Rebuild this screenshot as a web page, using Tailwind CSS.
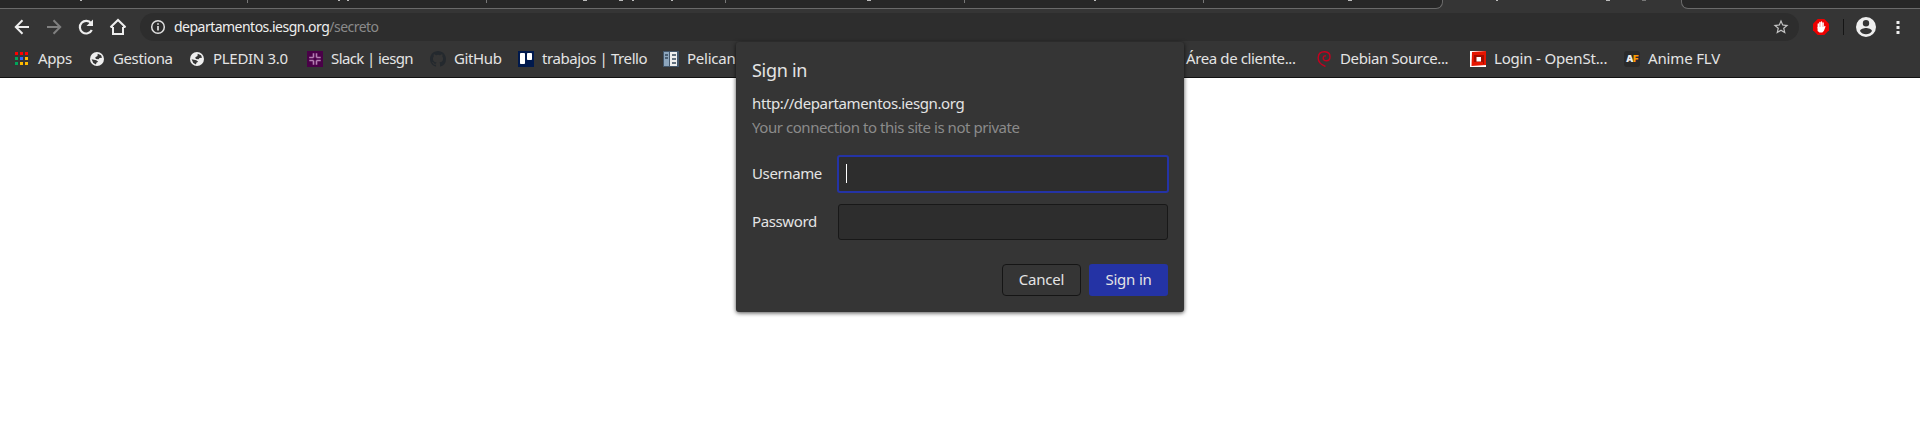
<!DOCTYPE html>
<html lang="es">
<head>
<meta charset="utf-8">
<title>departamentos.iesgn.org</title>
<script src="https://cdn.jsdelivr.net/npm/@tailwindcss/browser@4"></script>
</head>
<body class="h-[428px] overflow-hidden bg-white font-['Noto_Sans',sans-serif] text-[15px] leading-5 tracking-[-0.38px] text-[#e4e4e4]">
<div class="relative">
  <header class="h-[78px] border-b border-[#121212] bg-[#353535]">
    <!-- Bottom edge of the tab strip -->
    <div class="relative flex h-[9px]">
      <div class="h-[9px] w-[1443px] overflow-hidden rounded-br-[7px] border-r border-b border-[#6a6a6a] bg-[#272727]">
        <div class="flex h-[3px] pl-[247px]">
          <div class="w-[239px] border-l border-[#777]"></div><div class="w-[239px] border-l border-[#777]"></div><div class="w-[239px] border-l border-[#777]"></div><div class="w-[239px] border-l border-[#777]"></div><div class="w-[239px] border-l border-[#777]"></div>
        </div>
      </div>
      <div class="w-[238px]"></div>
      <div class="h-[9px] flex-1 rounded-bl-[7px] border-b border-l border-[#6a6a6a] bg-[#272727]"></div>
      <svg class="absolute top-0 left-0 h-px w-[1920px]" viewBox="0 0 1920 1" fill="#bbb"><path d="M80 0h2v1h-2zM338 0h2v1h-2zM347 0h2v1h-2zM583 0h4v1h-4zM619 0h4v1h-4zM632 0h2v1h-2zM671 0h2v1h-2zM867 0h4v1h-4zM1094 0h2v1h-2zM1348 0h4v1h-4zM1496 0h2v1h-2zM1606 0h4v1h-4z"/><path fill="#777" d="M1642 0h4v1h-4z"/></svg>
    </div>
    <!-- Toolbar -->
    <div class="flex h-[36px] items-center">
      <div class="flex w-[140px] items-center gap-2 pl-[10px]">
        <svg class="size-6" viewBox="0 0 24 24" fill="none" stroke="#eee" stroke-width="2"><path d="M19 12H6M12.500 5.300l-6.700 6.700 6.700 6.700"/></svg>
        <svg class="size-6" viewBox="0 0 24 24" fill="none" stroke="#808080" stroke-width="2"><path d="M5 12h13M11.500 5.300l6.700 6.700-6.700 6.700"/></svg>
        <svg class="size-6" viewBox="0 0 24 24" fill="none" stroke="#eee" stroke-width="2.200"><path d="M17.800 15a6.300 6.300 0 1 1-.6-6.600"/><path fill="#eee" stroke="none" d="M19 4.500V11h-6.500z"/></svg>
        <svg class="size-6" viewBox="0 0 24 24" fill="none" stroke="#eee" stroke-width="2"><path d="M7 12v7h10v-7M4.500 12H7M17 12h2.500M4.500 12.300L12 5l7.500 7.300"/></svg>
      </div>
      <div class="flex h-7 w-[1659px] shrink-0 items-center rounded-full bg-[#2d2d2d] pr-[9px] pl-[10px]">
        <svg class="size-4" viewBox="0 0 16 16" fill="none" stroke="#e0e0e0" stroke-width="1.500"><circle cx="8" cy="8" r="6.300"/><path d="M8 7v4.500M8 4.200v1.600" stroke-width="1.700"/></svg>
        <span class="ml-2 flex-1 text-[14px] tracking-[-0.52px] text-[#eee]">departamentos.iesgn.org<span class="text-[#8a8a8a]">/secreto</span></span>
        <svg class="size-[18px]" viewBox="0 0 24 24" fill="#c4c4c4"><path d="M22 9.240l-7.190-.620L12 2 9.190 8.630 2 9.240l5.460 4.730L5.820 21 12 17.270 18.180 21l-1.630-7.030L22 9.240zM12 15.400l-3.760 2.270 1-4.280-3.320-2.880 4.380-.380L12 6.100l1.710 4.040 4.380.380-3.320 2.880 1 4.280L12 15.400z"/></svg>
      </div>
      <svg class="ml-[14px] size-4" viewBox="0 0 16 16"><path fill="#ed0000" d="M4.700 0h6.600L16 4.700v6.600L11.300 16H4.700L0 11.300V4.700z"/><path d="M5.300 5v4M6.900 3.500v5M8.500 3v5.700M10.100 4v5" stroke="#fff" stroke-width="1.400" stroke-linecap="round"/><path fill="#fff" d="M4.600 8h6.200l1-1.200.8.800-1.800 4.400-1.500 1.500H6.500L4.600 12z"/></svg>
      <div class="ml-[14px] h-4 w-px bg-[#151515]"></div>
      <svg class="ml-[11px] size-[22px]" viewBox="1 1 22 22" fill="#eee"><path d="M12 2a10 10 0 1 0 0 20 10 10 0 0 0 0-20zm0 3a3.200 3.200 0 1 1 0 6.400A3.200 3.200 0 0 1 12 5zm0 14.200a7.200 7.200 0 0 1-6-3.200c0-2 4-3.100 6-3.100s6 1.100 6 3.100a7.200 7.200 0 0 1-6 3.200z"/></svg>
      <svg class="ml-[13px] size-4" viewBox="0 0 16 16" fill="#eee"><path d="M6.500 2h3v3h-3zM6.500 7h3v3h-3zM6.500 12h3v3h-3z"/></svg>
    </div>
    <!-- Bookmarks -->
    <nav class="flex h-7 items-center pl-[14px] whitespace-nowrap">
      <div class="flex w-[75px] shrink-0 items-center gap-2"><svg class="size-4 shrink-0" viewBox="0 0 16 16"><path fill="#f00" d="M1 1h3v3H1zM6 1h3v3H6zM11 1h3v3h-3z"/><path fill="#00a65a" d="M1 6h3v3H1zM1 11h3v3H1z"/><path fill="#36f" d="M6 6h3v3H6z"/><path fill="#fb0" d="M11 6h3v3h-3zM6 11h3v3H6zM11 11h3v3h-3z"/></svg><span class="pb-0.5">Apps</span></div>
      <div class="flex w-[100px] shrink-0 items-center gap-2"><svg class="size-4 shrink-0" viewBox="0 0 16 16"><circle cx="8" cy="8" r="7" fill="#eee"/><path fill="#353535" d="M8.700 2.700l3.400 1.500.9 2.500-2.500.2-.8 1.300L6.800 8 6.300 6.300 8.500 5zM2.600 8.200l4.700 1 1.900 1.600-1.800 1-.4 1.700-2.700-1.600z"/></svg><span class="pb-0.5">Gestiona</span></div>
      <div class="flex w-[118px] shrink-0 items-center gap-2"><svg class="size-4 shrink-0" viewBox="0 0 16 16"><circle cx="8" cy="8" r="7" fill="#eee"/><path fill="#353535" d="M8.700 2.700l3.400 1.500.9 2.500-2.500.2-.8 1.300L6.800 8 6.300 6.300 8.500 5zM2.600 8.200l4.700 1 1.900 1.600-1.800 1-.4 1.700-2.700-1.600z"/></svg><span class="pb-0.5 tracking-[-0.3px]">PLEDIN 3.0</span></div>
      <div class="flex w-[123px] shrink-0 items-center gap-2"><svg class="size-4 shrink-0" viewBox="0 0 16 16"><path fill="#4a0048" d="M0 0h16v16H0z"/><path d="M6.500 2.300v4.200M2.200 6.500h4.300M9.500 2.300v4.200M9.500 6.500h4.200M2.300 9.500h4.200M6.500 9.500v4.200M9.500 9.500h4.200M9.500 9.500v4.200" stroke="#b47eb2" stroke-width="1.600"/></svg><span class="pb-0.5 tracking-[-0.6px]">Slack | iesgn</span></div>
      <div class="flex w-[88px] shrink-0 items-center gap-2"><svg class="size-4 shrink-0" viewBox="0 0 16 16"><path fill="#24292e" d="M8 0C3.580 0 0 3.580 0 8c0 3.540 2.290 6.530 5.470 7.590.4.070.55-.17.55-.38v-1.490c-2.010.37-2.530-.49-2.690-.94-.09-.23-.48-.94-.82-1.130-.28-.15-.68-.52-.01-.53.63-.01 1.080.58 1.230.82.720 1.210 1.870.87 2.330.66.070-.52.280-.87.510-1.070-1.780-.2-3.640-.89-3.640-3.950 0-.87.310-1.590.82-2.150-.08-.2-.36-1.020.080-2.120 0 0 .67-.21 2.200.82a7.600 7.600 0 0 1 4 0c1.530-1.040 2.200-.82 2.200-.82.440 1.100.160 1.920.080 2.120.510.560.820 1.270.820 2.150 0 3.070-1.870 3.750-3.650 3.950.290.250.540.730.540 1.480v2.200c0 .210.150.460.550.380A8 8 0 0 0 16 8c0-4.420-3.580-8-8-8z"/></svg><span class="pb-0.5">GitHub</span></div>
      <div class="flex w-[145px] shrink-0 items-center gap-2"><svg class="size-4 shrink-0" viewBox="0 0 16 16"><path fill="#00194d" d="M0 0h16v16H0z"/><rect x="2" y="2" width="5" height="11" rx=".8" fill="#fff"/><rect x="9" y="2" width="5" height="7" rx=".8" fill="#fff"/></svg><span class="pb-0.5 tracking-[-0.42px]">trabajos | Trello</span></div>
      <div class="flex w-[499px] shrink-0 items-center gap-2"><svg class="size-4 shrink-0" viewBox="0 0 16 16"><path fill="#42566b" d="M0 0h16v16H0z"/><path fill="#8da6bd" d="M1 1h5v14H1z"/><path fill="#eee" d="M7 1h7v14H7z"/><path d="M2 4h3M2 7h3M9 4h4M9 8h4M9 12h4" stroke="#34475a" stroke-width="1.500"/></svg><span class="pb-0.5 tracking-[-0.25px]">Pelican</span></div>
      <div class="flex w-[154px] shrink-0 items-center pl-6"><span class="pb-0.5">Área de cliente...</span></div>
      <div class="flex w-[154px] shrink-0 items-center gap-2"><svg class="size-4 shrink-0" viewBox="0 0 16 16" fill="none" stroke="#c4001f" stroke-width="1.400"><path d="M9.500 15.500C4.500 13.500 2 10 2.200 6.500 2.500 2.500 5.500.6 9 .8c3 .2 5 2.200 5 5 0 2.300-1.500 4-3.500 4-2.200 0-3.500-1.300-3.300-3C7.400 5.300 8.500 4.500 10 5"/></svg><span class="pb-0.5">Debian Source...</span></div>
      <div class="flex w-[154px] shrink-0 items-center gap-2"><svg class="size-4 shrink-0" viewBox="0 0 16 16"><path fill="#fff" d="M0 0h16v16H0z"/><path fill="#e61500" d="M2 1l14-1v14L1.500 15z"/><path fill="#a30c00" d="M4 4h10v9H4z"/><path fill="#e61500" d="M4 11h9v2H4z"/><path fill="#fff" d="M6.500 6h4.500v4.500H6.500z"/></svg><span class="pb-0.5 tracking-[-0.18px]">Login - OpenSt...</span></div>
      <div class="flex shrink-0 items-center gap-2"><span class="flex size-4 items-center justify-center rounded-[3px] bg-[#2a2a2a] font-['Inter',sans-serif] text-[9.500px] leading-none font-black tracking-[-0.5px] text-[#eee]">A<span class="text-[#ff9a00]">F</span></span><span class="pb-0.5 tracking-[-0.15px]">Anime FLV</span></div>
    </nav>
  </header>

  <!-- Sign-in dialog, over the bookmarks bar and the page -->
  <section class="absolute top-[42px] left-[736px] flex h-[270px] w-[448px] flex-col rounded-[3px] bg-[#353535] px-4 pt-4 shadow-[0_1px_4px_rgba(0,0,0,0.7)]">
    <h1 class="text-[18px] leading-6 tracking-[-0.3px]">Sign in</h1>
    <p class="mt-[11px]">http://departamentos.iesgn.org</p>
    <p class="mt-1 font-stretch-semi-condensed tracking-[-0.45px] text-[#8b8b8b]">Your connection to this site is not private</p>
    <div class="mt-[18px] flex h-[38px] items-center">
      <label class="w-[85px] shrink-0 pb-0.5">Username</label>
      <div class="flex h-[38px] w-[332px] shrink-0 items-center rounded-[3px] border-2 border-[#2433a5] bg-[#2d2d2d] pl-[7px]"><span class="mb-px h-[19px] w-px bg-white"></span></div>
    </div>
    <div class="mt-[11px] flex h-9 items-center">
      <label class="w-[86px] shrink-0 pb-0.5">Password</label>
      <div class="h-9 w-[330px] shrink-0 rounded-[3px] border border-[#181818] bg-[#2d2d2d]"></div>
    </div>
    <div class="mt-6 flex justify-end gap-2">
      <button class="h-8 w-[79px] rounded-[4px] border border-[#151515] pb-[3px] tracking-[-0.2px]">Cancel</button>
      <button class="h-8 w-[79px] rounded-[3px] bg-[#2433a5] pb-[3px] tracking-[-0.2px]">Sign in</button>
    </div>
  </section>
</div>
</body>
</html>
